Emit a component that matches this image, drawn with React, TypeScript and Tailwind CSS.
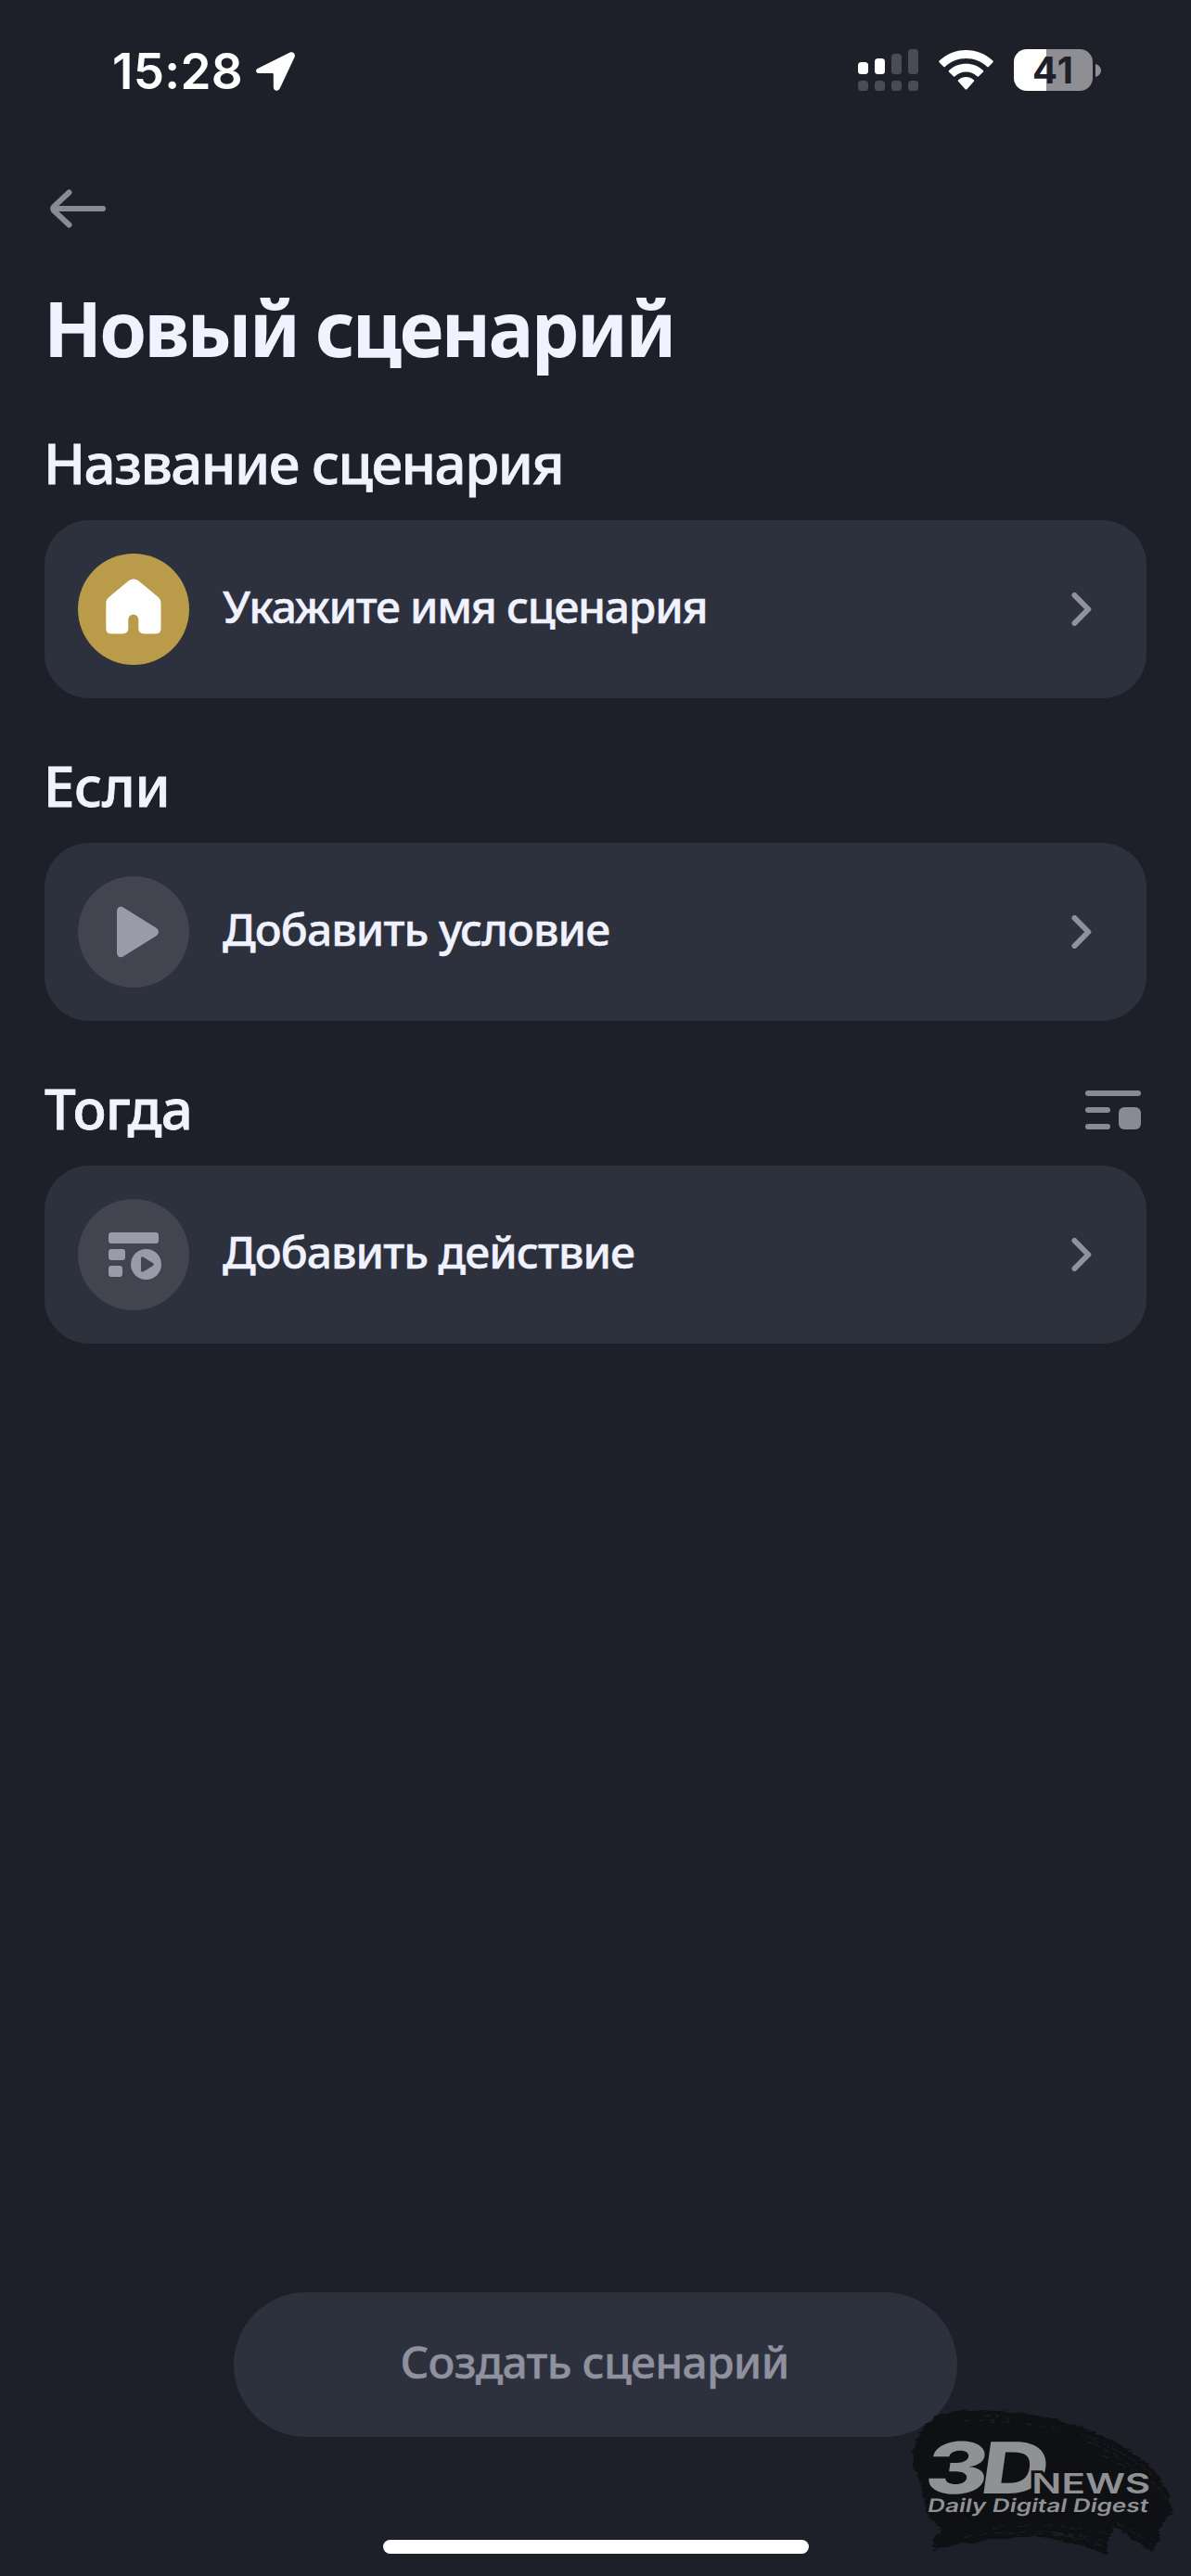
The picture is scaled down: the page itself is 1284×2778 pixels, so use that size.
import type { ReactNode } from "react";

type ScenarioRowProps = {
  icon: ReactNode;
  iconClassName: string;
  label: string;
  labelClassName: string;
};

function LocationIcon() {
  return (
    <svg aria-hidden="true" className="ml-[14px] mt-[3px] h-[42px] w-[42px]" fill="currentColor" viewBox="0 0 42 42">
      <path d="M2.6 17.4 36.2.7c3.6-1.6 6.8 1.4 5.3 5.1L26 38.800c-1.700 4.500-7.200 3.700-7.200-1V24.400c0-.9-.4-1.300-1.300-1.300H4.200c-4.800 0-5.600-4-1.600-5.700Z" />
    </svg>
  );
}

function SignalIcon() {
  return (
    <svg aria-hidden="true" className="h-[45px] w-[65px]" fill="#4b4b55" viewBox="0 0 65 45">
      <rect fill="#fff" height="13" rx="3.500" width="11" x="0" y="14" />
      <rect fill="#fff" height="17" rx="3.500" width="11" x="18" y="10" />
      <rect height="22" rx="3.500" width="11" x="36" y="5" />
      <rect height="27" rx="3.500" width="11" x="54" y="0" />
      <rect height="11" rx="3.500" width="11" x="0" y="34" />
      <rect height="11" rx="3.500" width="11" x="18" y="34" />
      <rect height="11" rx="3.500" width="11" x="36" y="34" />
      <rect height="11" rx="3.500" width="11" x="54" y="34" />
    </svg>
  );
}

function WifiIcon() {
  return (
    <svg aria-hidden="true" className="ml-[22px] h-[43px] w-[59px]" fill="currentColor" viewBox="0 0 59 43">
      <path d="M29.500 0C18.500 0 8.500 4.200.9 11.300c-.8.7-.8 1.500-.1 2.200l4.200 4.200c.7.700 1.400.7 2.100 0C13.100 12 21 8.900 29.500 8.900s16.400 3.100 22.400 8.800c.7.700 1.400.7 2.100 0l4.200-4.200c.7-.7.7-1.500-.1-2.200C50.500 4.200 40.500 0 29.500 0Z" />
      <path d="M29.500 14.700c-7 0-13.400 2.600-18.200 7-.8.7-.8 1.400-.1 2.100l4.400 4.300c.7.700 1.300.7 2 .1 3.200-2.900 7.400-4.600 11.900-4.600s8.700 1.700 11.900 4.600c.7.600 1.300.6 2-.1l4.400-4.300c.7-.7.7-1.400-.1-2.100-4.800-4.400-11.200-7-18.200-7Z" />
      <path d="M29.500 29.100c-3.100 0-5.900 1.100-8.100 2.900-.8.700-.8 1.300-.1 2l7.100 7.900c.7.800 1.500.8 2.200 0l7.100-7.900c.7-.7.7-1.300-.1-2-2.200-1.800-5-2.900-8.100-2.900Z" />
    </svg>
  );
}

function Battery() {
  return (
    <div className="ml-[22px] flex items-center">
      <div className="flex h-[45px] w-[85px] items-center justify-center rounded-[14px] bg-linear-to-r from-white from-[41%] to-[#8e8e93] to-[41%] font-[Inter,sans-serif] text-[40px] leading-[45px] font-bold tracking-[1px] text-[#1e2029]">
        41
      </div>
      <svg aria-hidden="true" className="ml-[3px] h-[14px] w-[6px]" fill="#8e8e93" viewBox="0 0 6 14">
        <path d="M0 0c3.500 1 6 3.700 6 7s-2.500 6-6 7Z" />
      </svg>
    </div>
  );
}

function StatusBar() {
  return (
    <div className="flex h-[151px] items-center pr-[97px] pl-[121px] text-white">
      <span className="pt-[2px] font-[Inter,sans-serif] text-[53px] leading-[64px] font-semibold tracking-[0.3px]">
        15:28
      </span>
      <LocationIcon />
      <div className="ml-auto flex items-center">
        <SignalIcon />
        <WifiIcon />
        <Battery />
      </div>
    </div>
  );
}

function BackIcon() {
  return (
    <svg
      aria-hidden="true"
      className="h-[42px] w-[60px]"
      fill="none"
      stroke="#888a95"
      strokeLinecap="round"
      strokeLinejoin="round"
      strokeWidth="6"
      viewBox="0 0 60 42"
    >
      <path d="M57 21H4M20.500 3.500 4 18.900Q2.400 21 4 23.100L20.500 38.500" />
    </svg>
  );
}

function ChevronIcon() {
  return (
    <svg
      aria-hidden="true"
      className="h-[36px] w-[22px]"
      fill="none"
      stroke="#8f919e"
      strokeLinecap="round"
      strokeLinejoin="round"
      strokeWidth="6"
      viewBox="0 0 22 36"
    >
      <path d="m3.500 3 14.800 15L3.500 33" />
    </svg>
  );
}

function HomeIcon() {
  return (
    <svg aria-hidden="true" className="size-[120px]" fill="#fff" viewBox="0 0 120 120">
      <path d="M54.400 29.400c3.300-2.700 7.900-2.700 11.200 0l20.700 17.300c2.100 1.800 3.200 4 3.200 6.800v27.300c0 3.700-2 5.700-5.700 5.700H71.200c-3.800 0-5.900-2.100-5.900-5.900v-9.200c0-3.400-2.300-5.700-5.500-5.700s-5.500 2.300-5.500 5.700v9.200c0 3.800-2.100 5.900-5.900 5.900H36.200c-3.700 0-5.900-2-5.900-5.700V53.500c0-2.800 1.200-5 3.400-6.800Z" />
    </svg>
  );
}

function PlayIcon() {
  return (
    <svg aria-hidden="true" className="size-[120px]" fill="#9a9ba8" viewBox="0 0 120 120">
      <path d="M42 37.500c0-4.300 4-6.200 7.200-3.700l35.300 22c3.300 2.100 3.300 6.300 0 8.400l-35.300 22C46 88.700 42 86.800 42 82.500Z" />
    </svg>
  );
}

function ActionIcon() {
  return (
    <svg aria-hidden="true" className="size-[120px]" fill="#9a9ba8" viewBox="0 0 120 120">
      <rect height="12" rx="3" width="54" x="33" y="36" />
      <rect height="12" rx="3" width="18" x="33" y="54" />
      <rect height="12" rx="3" width="15" x="33" y="72" />
      <circle cx="73.500" cy="70.500" r="16.500" />
      <path d="M68 64.300c0-1.800 1.200-2.500 2.700-1.500L81 69.200c1.200.8 1.200 1.900 0 2.700l-10.300 6.400c-1.500 1-2.700.3-2.700-1.500Z" fill="#424550" />
    </svg>
  );
}

function ReorderIcon() {
  return (
    <svg aria-hidden="true" className="mt-[4px] h-[42px] w-[60px]" fill="#888a95" viewBox="0 0 60 42">
      <rect height="6" rx="3" width="60" x="0" y="0" />
      <rect height="6" rx="3" width="27" x="0" y="18" />
      <rect height="6" rx="3" width="27" x="0" y="36" />
      <rect height="24" rx="6" width="24" x="36" y="18" />
    </svg>
  );
}

function ScenarioRow({ icon, iconClassName, label, labelClassName }: ScenarioRowProps) {
  return (
    <button
      className="mt-[21px] flex h-[192px] w-full items-center rounded-[48px] bg-[#2d303d] pr-[59px] pl-[36px] text-left"
      type="button"
    >
      <span className={`size-[120px] shrink-0 rounded-full ${iconClassName}`}>{icon}</span>
      <span
        className={`ml-[36px] flex-1 pb-[6px] text-[48px] leading-[66px] font-medium [-webkit-text-stroke:0.5px] ${labelClassName}`}
      >
        {label}
      </span>
      <ChevronIcon />
    </button>
  );
}

// 3DNews stamp: dry brush stroke with the logo on top of it
function Watermark() {
  return (
    <svg
      aria-label="3DNews Daily Digital Digest"
      className="absolute right-0 bottom-0 h-[198px] w-[324px]"
      role="img"
      viewBox="0 0 972 594"
    >
      <defs>
        <filter colorInterpolationFilters="sRGB" height="120%" id="brush" width="120%" x="-10%" y="-10%">
          <feTurbulence baseFrequency="0.02 0.12" numOctaves="3" seed="4" type="fractalNoise" />
          <feDisplacementMap in="SourceGraphic" scale="22" xChannelSelector="R" yChannelSelector="G" />
        </filter>
      </defs>
      <g filter="url(#brush)">
        <path
          d="M84 150 108 112 150 74Q250 50 400 64 560 82 690 144 790 190 852 250L880 300 904 326 900 350 916 384 890 410 866 450 872 474 846 516 724 432 706 470 700 528Q600 480 470 468 330 464 140 510L136 470 170 446 126 404 106 350 100 300 76 240 74 200Z"
          fill="#0f1013"
        />
        <g fill="none" stroke="#1e2029" strokeWidth="3">
          <path d="M160 82Q300 62 420 88" strokeDasharray="28 18 9 12" />
          <path d="M240 92Q420 86 570 130" strokeDasharray="12 22 30 18" />
          <path d="M620 136Q760 190 850 266" strokeDasharray="60 10 24 8" />
          <path d="M640 160Q760 210 880 320" strokeDasharray="40 16 20 12" />
          <path d="M690 206Q820 260 900 350" strokeDasharray="20 26 34 14" />
          <path d="M330 440Q500 410 716 462" strokeDasharray="40 14 12 18" />
          <path d="M200 474Q460 424 712 486" strokeDasharray="20 16 46 12" />
          <path d="M380 456Q560 440 704 506" strokeDasharray="50 8 18 10" />
          <path d="M730 420 860 500" strokeDasharray="30 10" />
        </g>
      </g>
      <g fill="#909195" fontFamily="Inter, sans-serif">
        <g fontSize="230" fontWeight="800" transform="translate(104 326) skewX(-8)">
          <text lengthAdjust="spacingAndGlyphs" textLength="204" x="0" y="0">
            3
          </text>
          <text lengthAdjust="spacingAndGlyphs" textLength="218" x="180" y="0">
            D
          </text>
        </g>
        <text
          fontSize="91"
          fontWeight="600"
          lengthAdjust="spacingAndGlyphs"
          paintOrder="stroke"
          stroke="#0f1013"
          strokeLinejoin="miter"
          strokeWidth="16"
          textLength="384"
          x="457"
          y="327"
        >
          NEWS
        </text>
        <text
          fontSize="60"
          fontWeight="600"
          lengthAdjust="spacingAndGlyphs"
          textLength="714"
          transform="translate(117 386) skewX(-11)"
          x="0"
          y="0"
        >
          Daily Digital Digest
        </text>
      </g>
    </svg>
  );
}

export default function App() {
  return (
    <div className="relative flex h-[2778px] w-[1284px] flex-col overflow-hidden bg-[#1e2029] font-['Noto_Sans',sans-serif] text-[#f0f2ff]">
      <StatusBar />

      <main className="flex flex-col px-[48px] pt-[53px]">
        <button aria-label="Назад" className="ml-[6px] self-start" type="button">
          <BackIcon />
        </button>
        <h1 className="mt-[50px] -ml-px text-[82px] leading-[114px] font-bold tracking-[-2.8px]">
          Новый сценарий
        </h1>

        <section className="mt-[48px]">
          <h2 className="-ml-px text-[60px] leading-[82px] font-medium tracking-[-1.5px] [-webkit-text-stroke:0.8px]">
            Название сценария
          </h2>
          <ScenarioRow
            icon={<HomeIcon />}
            iconClassName="bg-[#b99b4a]"
            label="Укажите имя сценария"
            labelClassName="tracking-[-1.25px]"
          />
        </section>

        <section className="mt-[53px]">
          <h2 className="-ml-px text-[60px] leading-[82px] font-medium tracking-[-0.3px] [-webkit-text-stroke:0.8px]">
            Если
          </h2>
          <ScenarioRow
            icon={<PlayIcon />}
            iconClassName="bg-[#424550]"
            label="Добавить условие"
            labelClassName="tracking-[-0.9px]"
          />
        </section>

        <section className="mt-[53px]">
          <div className="flex items-center justify-between pr-[6px]">
            <h2 className="text-[60px] leading-[82px] font-medium tracking-[-0.8px] [-webkit-text-stroke:0.8px]">
              Тогда
            </h2>
            <ReorderIcon />
          </div>
          <ScenarioRow
            icon={<ActionIcon />}
            iconClassName="bg-[#424550]"
            label="Добавить действие"
            labelClassName="tracking-[-0.95px]"
          />
        </section>
      </main>

      <footer className="mt-auto flex flex-col items-center pb-[24px]">
        <button
          className="h-[156px] w-[780px] rounded-full bg-[#2d303d] pr-[2px] pb-[6px] text-[48px] leading-[66px] font-medium tracking-[-0.75px] text-[#8f919e] [-webkit-text-stroke:0.5px]"
          type="button"
        >
          Создать сценарий
        </button>
        <div className="mt-[111px] h-[15px] w-[459px] rounded-full bg-white" />
      </footer>

      <Watermark />
    </div>
  );
}
